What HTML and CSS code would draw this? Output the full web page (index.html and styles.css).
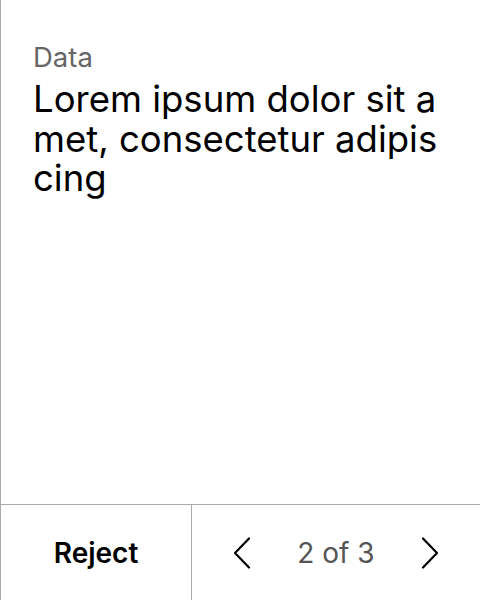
FILE: index.html
```html
<!DOCTYPE html>
<html>
<head>
<meta charset="utf-8">
<link rel="stylesheet" href="styles.css">
</head>
<body>
<div class="card">
  <div class="content">
    <div class="label">Data</div>
    <div class="title">Lorem ipsum dolor sit amet, consectetur adipiscing</div>
  </div>
  <div class="bar">
    <button class="reject">Reject</button>
    <div class="pager">
      <button class="nav" aria-label="Previous">
        <svg width="18" height="32" viewBox="0 0 18 32"><path d="M16 1.5 L2 16 L16 30.5" fill="none" stroke="#000" stroke-width="2.2" stroke-linecap="round" stroke-linejoin="round"/></svg>
      </button>
      <span class="count">2 of 3</span>
      <button class="nav" aria-label="Next">
        <svg width="18" height="32" viewBox="0 0 18 32"><path d="M2 1.5 L16 16 L2 30.5" fill="none" stroke="#000" stroke-width="2.2" stroke-linecap="round" stroke-linejoin="round"/></svg>
      </button>
    </div>
  </div>
</div>
</body>
</html>
```

FILE: styles.css
```css
* { box-sizing: border-box; }
html, body { margin: 0; padding: 0; background: #fff; }
body {
  font-family: Inter, "Noto Sans", sans-serif;
}
.card {
  width: 480px;
  height: 600px;
  border-left: 1px solid #aaaaaa;
  display: flex;
  flex-direction: column;
}
.content {
  flex: 1;
  padding: 39px 32px 0 32px;
}
.label {
  font-size: 27.5px;
  line-height: 36px;
  color: #666666;
}
.title {
  margin-top: 5px;
  font-size: 36.5px;
  line-height: 39.5px;
  color: #000;
  word-break: break-all;
}
.bar {
  height: 96px;
  border-top: 1px solid #aaaaaa;
  display: flex;
}
.reject {
  width: 191px;
  border: none;
  border-right: 1px solid #aaaaaa;
  background: none;
  font-family: inherit;
  font-size: 28px;
  font-weight: 600;
  color: #000;
  padding: 0;
}
.pager {
  flex: 1;
  display: flex;
  align-items: center;
  justify-content: center;
  gap: 46px;
}
.nav {
  border: none;
  background: none;
  padding: 0;
  display: flex;
}
.count {
  font-size: 28px;
  color: #555555;
}
```
